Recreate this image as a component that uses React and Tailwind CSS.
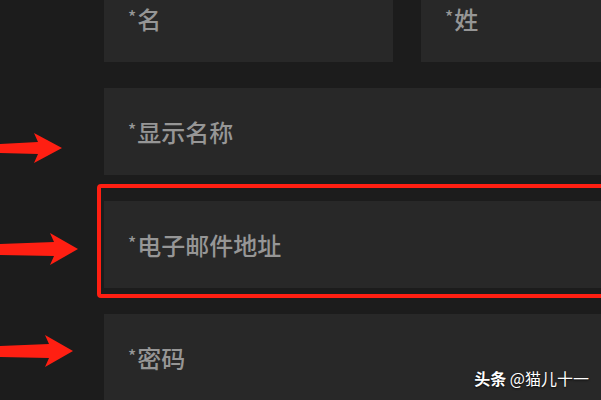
const Arrow = ({ className, tip = 62, headStart = 34, headHalf = 15, shaft = 6 }) => (
    <svg className={className} width={tip + 2} height={headHalf * 2 + 2} viewBox={`0 0 ${tip + 2} ${headHalf * 2 + 2}`}>
        <path
            d={`M0 ${headHalf + 1 - shaft + 2} L${headStart + 4} ${headHalf + 1 - shaft} L${headStart} 1 L${tip} ${headHalf + 1} L${headStart} ${headHalf * 2 + 1} L${headStart + 4} ${headHalf + 1 + shaft} L0 ${headHalf + 1 + shaft - 1} Z`}
            fill="#ff1f12"
        />
    </svg>
);

const Field = ({ label, className = '' }) => (
    <div className={`h-[87px] bg-[#282828] flex items-center pl-[24px] ${className}`}>
        <span className="text-[24px] leading-none font-medium text-[#969696]">
            <span className="text-[17px] align-top relative top-[1px] mr-[1px]">*</span>{label}
        </span>
    </div>
);

export default function App() {
    return (
        <div
            className="relative w-[601px] h-[400px] overflow-hidden bg-[#1c1c1c]"
            style={{ fontFamily: '"Noto Sans CJK SC", "Noto Sans", sans-serif' }}
        >
            <div className="w-[720px] pl-[104px] -mt-[25px] flex flex-col gap-[26px]">
                <div className="grid grid-cols-[289px_1fr] gap-[28px]">
                    <Field label="名" />
                    <Field label="姓" />
                </div>
                <Field label="显示名称" />
                <div className="relative">
                    <Field label="电子邮件地址" />
                    <div className="absolute -top-[17px] -left-[7px] -right-[10px] -bottom-[10px] border-[4px] border-[#ff1f12] rounded-[4px] pointer-events-none" />
                </div>
                <Field label="密码" />
            </div>

            <Arrow className="absolute left-0 top-[132px]" tip={62} headStart={34} headHalf={15} shaft={6} />
            <Arrow className="absolute left-0 top-[232px]" tip={78} headStart={50} headHalf={16} shaft={7} />
            <Arrow className="absolute left-0 top-[334px]" tip={73} headStart={45} headHalf={16} shaft={7} />

            <div className="absolute right-[12px] bottom-[14px] text-[16px] leading-none text-white [text-shadow:0_1px_2px_rgba(0,0,0,0.8)]">
                <span className="font-bold">头条</span> @猫儿十一
            </div>
        </div>
    );
}
